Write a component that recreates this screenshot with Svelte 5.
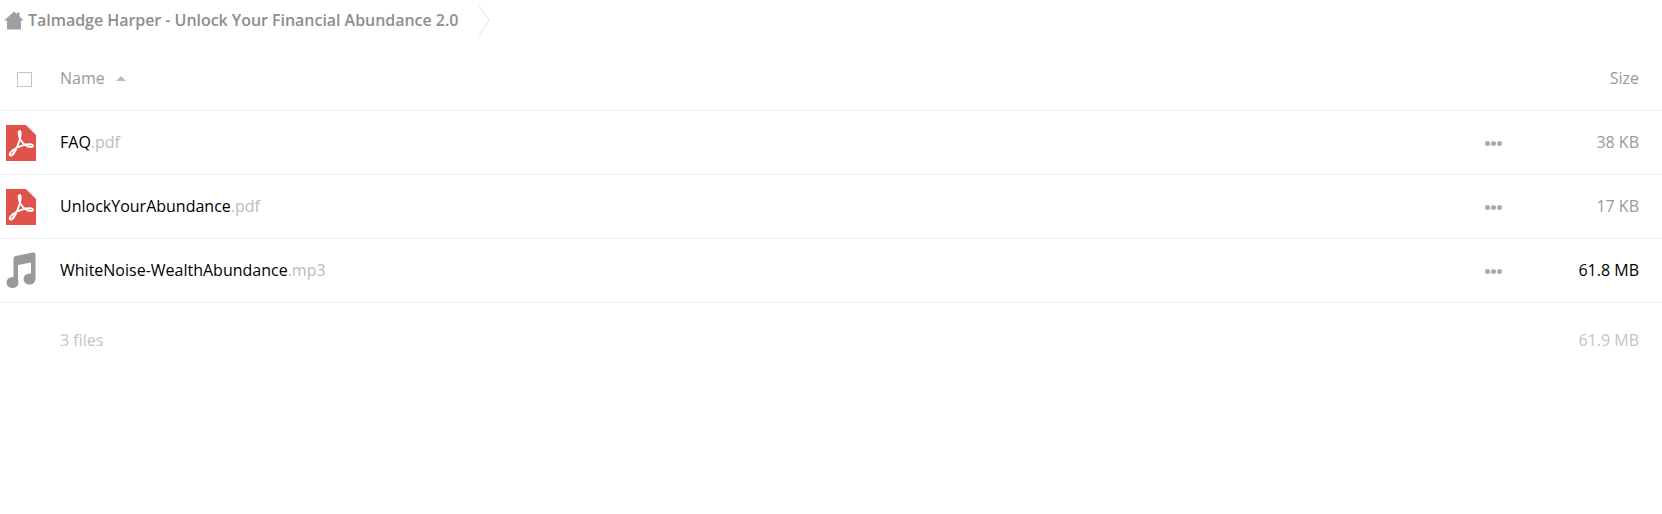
<script>
    const files = [
        { name: "FAQ", ext: ".pdf", size: "38 KB", type: "pdf" },
        { name: "UnlockYourAbundance", ext: ".pdf", size: "17 KB", type: "pdf" },
        { name: "WhiteNoise-WealthAbundance", ext: ".mp3", size: "61.8 MB", type: "audio", dark: true }
    ];
</script>

<div class="page">
    <div class="crumbs">
        <svg class="home" width="20" height="19" viewBox="0 0 20 19">
            <path d="M10 0.5 L13 3.2 V1.5 H15.5 V5.5 L19.8 9.5 H17 V18.5 H3 V9.5 H0.2 Z" fill="#a0a0a0" />
        </svg>
        <span class="crumb">Talmadge Harper - Unlock Your Financial Abundance 2.0</span>
        <svg class="chevron" width="12" height="31" viewBox="0 0 12 31">
            <path d="M1 0.5 L11 15.5 L1 30.5" fill="none" stroke="#e2e2e2" />
        </svg>
    </div>

    <div class="row head">
        <div class="icon-col"><span class="check"></span></div>
        <div class="name">
            <span>Name</span>
            <span class="sort"></span>
        </div>
        <div class="size">Size</div>
    </div>

    {#each files as file}
        <div class="row file">
            <div class="icon-col">
                {#if file.type === "pdf"}
                    <svg class="type-icon" width="30" height="36" viewBox="0 0 30 36">
                        <path d="M0 0 H20 L30 10 V36 H0 Z" fill="#e0534b" />
                        <path d="M4.5 30.5 C7 31 11 23 13.5 15.5 C15 10.5 15 6 13.5 6 C12 6 12.5 11.5 15 15.5 C17.5 19.5 21 22 25 22 C27.5 22 27.5 20 25.5 19.5 C21 18.5 11 21.5 6.5 25.5 C3.5 28 3 30.2 4.5 30.5 Z" fill="none" stroke="#fff" stroke-width="1.9" stroke-linejoin="round" />
                    </svg>
                {:else}
                    <svg class="type-icon audio" width="30" height="36" viewBox="0 0 30 36">
                        <path d="M7.5 6.5 Q7.5 4.5 9.5 4 L27 0.6 Q29.5 0.3 29.5 2.5 V27 H25 V10.5 L12 13 V31 H7.5 Z" fill="#999" />
                        <ellipse cx="6.5" cy="30.5" rx="6" ry="5.5" fill="#999" />
                        <ellipse cx="23.5" cy="27" rx="6" ry="5.5" fill="#999" />
                    </svg>
                {/if}
            </div>
            <div class="name">
                <span class="base">{file.name}</span><span class="ext">{file.ext}</span>
            </div>
            <div class="dots"><i></i><i></i><i></i></div>
            <div class="size" class:dark={file.dark}>{file.size}</div>
        </div>
    {/each}

    <div class="row foot">
        <div class="icon-col"></div>
        <div class="name">3 files</div>
        <div class="size">61.9 MB</div>
    </div>
</div>

<style>
    :global(body) {
        background: #fff;
        overflow: hidden;
    }
    .page {
        font-family: "Open Sans", sans-serif;
        font-size: 16px;
        color: #999;
    }
    .crumbs {
        display: flex;
        align-items: center;
        height: 40px;
        padding-left: 4px;
    }
    .home {
        margin-right: 4px;
    }
    .crumb {
        font-weight: 600;
        color: #8e8e8e;
        letter-spacing: -0.04px;
    }
    .chevron {
        margin-left: 20px;
    }
    .row {
        display: flex;
        align-items: center;
        padding-right: 23px;
        border-bottom: 1px solid #ededed;
    }
    .head {
        padding-top: 8px;
        box-sizing: border-box;
        height: 71px;
    }
    .file {
        height: 63px;
    }
    .head .name,
    .head .size,
    .file .name,
    .file .size {
        padding-bottom: 2px;
    }
    .foot {
        height: 74px;
        border-bottom: none;
        color: #c4c4c4;
    }
    .icon-col {
        width: 60px;
        flex: none;
        display: flex;
        padding-left: 6px;
        box-sizing: border-box;
    }
    .audio {
        margin-top: -2px;
    }
    .check {
        width: 15px;
        height: 15px;
        box-sizing: border-box;
        border: 1px solid #c4c4c4;
        margin-left: 11px;
    }
    .name {
        flex: 1;
        display: flex;
        align-items: center;
    }
    .base {
        color: #000;
    }
    .ext {
        color: #bbb;
    }
    .sort {
        width: 0;
        height: 0;
        margin-left: 11px;
        border-left: 5px solid transparent;
        border-right: 5px solid transparent;
        border-bottom: 5px solid #bbb;
    }
    .dots {
        display: flex;
        gap: 1px;
        margin-right: 61px;
        padding-top: 2px;
    }
    .dots i {
        width: 5px;
        height: 5px;
        border-radius: 50%;
        background: #aaa;
    }
    .size {
        width: 76px;
        text-align: right;
    }
    .dark {
        color: #000;
    }
</style>
